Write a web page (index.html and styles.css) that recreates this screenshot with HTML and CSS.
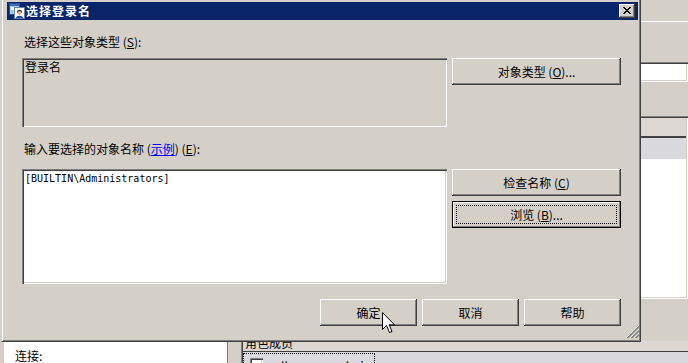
FILE: index.html
```html
<!DOCTYPE html>
<html lang="zh-CN">

<head>
    <meta charset="UTF-8">
    <title>选择登录名</title>
    <link rel="stylesheet" href="styles.css">
</head>

<body>
    <!-- the login properties window that lies behind the dialog -->
    <div class="app">
        <div class="sidebar">
            <div class="conn-panel">连接:</div>
        </div>
        <div class="main">
            <div class="sep"></div>
            <div class="field"></div>
            <div class="list list-top">
                <div class="list-head"></div>
                <div class="list-row"></div>
            </div>
            <div class="list list-members">
                <div class="list-head"><span class="head-text">角色成员</span></div>
                <div class="list-row">
                    <div class="row-focus">
                        <span class="check"></span>
                        <span class="row-text">db_accessadmin</span>
                    </div>
                </div>
            </div>
        </div>
    </div>

    <div class="dialog">
        <div class="titlebar">
            <div class="title-icon">
                <svg width="16" height="16" viewBox="0 0 16 16">
                    <rect x="0.5" y="0.5" width="10" height="11" fill="#a6caf0" stroke="#2f4f9f" />
                    <rect x="1" y="1" width="9" height="2" fill="#3a6ea5" />
                    <rect x="2" y="4" width="3" height="3" fill="#ffffff" />
                    <rect x="5.5" y="4.5" width="10" height="11" fill="#ffffff" stroke="#6c7fa8" />
                    <path d="M8 9 C8 6 13 6 13 9 L12.5 10 L8.5 10 Z" fill="#3b2a1a" />
                    <circle cx="10.5" cy="10" r="2" fill="#e9b487" />
                    <path d="M7 15 C7 12 14 12 14 15 Z" fill="#1e4ea0" />
                </svg>
            </div>
            <span class="title-text">选择登录名</span>
            <div class="close-btn">
                <svg width="8" height="7" viewBox="0 0 8 7" shape-rendering="crispEdges">
                    <path d="M0 0h2v1H0z M6 0h2v1H6z M1 1h2v1H1z M5 1h2v1H5z M2 2h4v1H2z M3 3h2v1H3z M2 4h4v1H2z M1 5h2v1H1z M5 5h2v1H5z M0 6h2v1H0z M6 6h2v1H6z" fill="#000" />
                </svg>
            </div>
        </div>

        <div class="content">
            <div class="label">选择这些对象类型 (<u>S</u>):</div>
            <div class="pick-row">
                <div class="sunken types-box">登录名</div>
                <div class="side-buttons">
                    <div class="btn">对象类型 (<u>O</u>)...</div>
                </div>
            </div>

            <div class="label label-names">输入要选择的对象名称 (<span class="link">示例</span>) (<u>E</u>):</div>
            <div class="pick-row pick-names">
                <div class="sunken names-box">[BUILTIN\Administrators]</div>
                <div class="side-buttons">
                    <div class="btn">检查名称 (<u>C</u>)</div>
                    <div class="btn btn-focus">浏览 (<u>B</u>)...</div>
                </div>
            </div>

            <div class="actions">
                <div class="btn">确定</div>
                <div class="btn">取消</div>
                <div class="btn">帮助</div>
            </div>
        </div>

        <svg class="grip" width="13" height="13" viewBox="0 0 13 13">
            <path d="M13 0 L0 13 M13 4 L4 13 M13 8 L8 13" stroke="#ffffff" stroke-width="1" />
            <path d="M13 1.5 L1.5 13 M13 5.5 L5.5 13 M13 9.5 L9.5 13" stroke="#808080" stroke-width="1.6" />
        </svg>
    </div>

    <svg class="cursor" width="14" height="22" viewBox="0 0 14 22">
        <path d="M0.5 0.5 L0.5 17.5 L4.5 13.5 L7.5 20.5 L10 19.5 L7.2 12.8 L12.5 12.8 Z" fill="#ffffff" stroke="#000000" stroke-width="1" stroke-linejoin="miter" />
    </svg>
</body>

</html>
```

FILE: styles.css
```css
body {
    margin: 0;
    width: 688px;
    height: 363px;
    overflow: hidden;
    position: relative;
    background-color: #d4d0c8;
    font-family: "Noto Sans CJK SC", "Liberation Sans", sans-serif;
    font-size: 12px;
    line-height: 12px;
    color: #000;
}

/* background window */

.app {
    display: flex;
    height: 363px;
}

.sidebar {
    width: 228px;
    display: flex;
    flex-direction: column;
    justify-content: flex-end;
}

.conn-panel {
    height: 21px;
    margin-left: 4px;
    padding: 8px 0 0 11px;
    box-sizing: border-box;
    background-color: #fff;
    border-right: 1px solid #808080;
}

.main {
    flex: 1;
    margin-left: 13px;
    padding-top: 21px;
    display: flex;
    flex-direction: column;
    min-height: 0;
}

.main > div {
    flex-shrink: 0;
}

.sep {
    height: 1px;
    background-color: #fff;
}

.field {
    height: 20px;
    margin-top: 40px;
    background-color: #fff;
    box-shadow: inset 1px 1px #808080, inset 2px 2px #404040,
        inset -1px -1px #fff, inset -2px -2px #d4d0c8;
}

.list {
    box-sizing: border-box;
    background-color: #fff;
}

.list-top {
    height: 183px;
    margin-top: 34px;
    padding: 2px;
    box-shadow: inset 1px 1px #808080, inset 2px 2px #404040,
        inset -1px -1px #fff, inset -2px -2px #d4d0c8;
}

.list-head {
    height: 18px;
    background-color: #ddd7d3;
    border-bottom: 2px solid #404040;
}

.list-row {
    height: 21px;
    background-color: #dad9de;
}

.main > .list-members {
    flex: 1 1 0;
    min-height: 0;
    overflow: hidden;
    margin-top: 42px;
    padding-left: 2px;
    display: flex;
    flex-direction: column;
    box-shadow: inset 1px 0 #808080, inset 2px 0 #404040;
}

.list-members .list-head {
    flex-shrink: 0;
    height: 10px;
    border-bottom-width: 1px;
    overflow: hidden;
}

.head-text {
    display: block;
    margin: -4px 0 0 2px;
}

.list-members .list-row {
    flex: 1 0 auto;
    height: auto;
}

.row-focus {
    display: flex;
    align-items: flex-start;
    width: 130px;
    height: 30px;
    margin-top: 1px;
    border: 1px dotted #000;
}

.check {
    flex-shrink: 0;
    width: 13px;
    height: 13px;
    margin: 4px 0 0 6px;
    background-color: #fff;
    box-shadow: inset 1px 1px #808080, inset 2px 2px #404040,
        inset -1px -1px #fff, inset -2px -2px #d4d0c8;
}

.row-text {
    margin: 6px 0 0 14px;
}

/* dialog */

.dialog {
    position: absolute;
    left: 1px;
    top: -2px;
    width: 640px;
    height: 344px;
    box-sizing: border-box;
    padding: 3px 2px 3px 5px;
    display: flex;
    flex-direction: column;
    background-color: #d4d0c8;
    border: 1px solid;
    border-color: #d4d0c8 #404040 #404040 #d4d0c8;
    box-shadow: inset 1px 1px #fff, inset -1px -1px #808080;
}

.titlebar {
    flex-shrink: 0;
    height: 18px;
    padding: 0 3px 0 2px;
    display: flex;
    align-items: center;
    background-color: #0a246a;
}

.title-icon {
    flex: none;
    width: 16px;
    height: 16px;
}

.title-icon svg {
    display: block;
}

.title-text {
    margin-left: 1px;
    color: #fff;
    font-weight: bold;
    letter-spacing: 1px;
}

.close-btn {
    width: 16px;
    height: 14px;
    margin-left: auto;
    padding: 3px 0 0 4px;
    box-sizing: border-box;
    background-color: #d4d0c8;
    box-shadow: inset -1px -1px #404040, inset 1px 1px #fff, inset -2px -2px #808080;
}

.close-btn svg {
    display: block;
}

.content {
    flex: 1;
    padding: 16px 17px 0 15px;
    display: flex;
    flex-direction: column;
}

.label {
    height: 12px;
    margin-left: 2px;
    white-space: nowrap;
}

.label-names {
    margin-top: 16px;
}

.link {
    color: #0000ff;
    text-decoration: underline;
}

.pick-row {
    display: flex;
    gap: 5px;
    margin-top: 10px;
}

.pick-names {
    margin-top: 14px;
}

.sunken {
    width: 425px;
    box-sizing: border-box;
    padding: 3px;
    box-shadow: inset 1px 1px #808080, inset 2px 2px #404040,
        inset -1px -1px #fff, inset -2px -2px #d4d0c8;
}

.types-box {
    height: 69px;
}

.names-box {
    height: 115px;
    padding-top: 4px;
    background-color: #fff;
    font-family: "DejaVu Sans Mono", "Liberation Mono", monospace;
    font-size: 10px;
}

.side-buttons {
    width: 169px;
    display: flex;
    flex-direction: column;
    gap: 5px;
}

.btn {
    position: relative;
    height: 27px;
    box-sizing: border-box;
    padding-top: 1px;
    display: flex;
    align-items: center;
    justify-content: center;
    white-space: nowrap;
    background-color: #d4d0c8;
    box-shadow: inset -1px -1px #404040, inset 1px 1px #fff,
        inset -2px -2px #808080, inset 2px 2px #d4d0c8;
}

.btn-focus {
    border: 1px solid #000;
    box-shadow: inset -1px -1px #808080, inset 1px 1px #fff;
}

.btn-focus::after {
    content: "";
    position: absolute;
    top: 3px;
    left: 3px;
    right: 3px;
    bottom: 3px;
    border: 1px dotted #000;
}

.actions {
    display: flex;
    justify-content: flex-end;
    gap: 5px;
    margin-top: 15px;
}

.actions .btn {
    width: 97px;
}

.grip {
    position: absolute;
    right: 1px;
    bottom: 3px;
}

.cursor {
    position: absolute;
    left: 382px;
    top: 312px;
}
```
